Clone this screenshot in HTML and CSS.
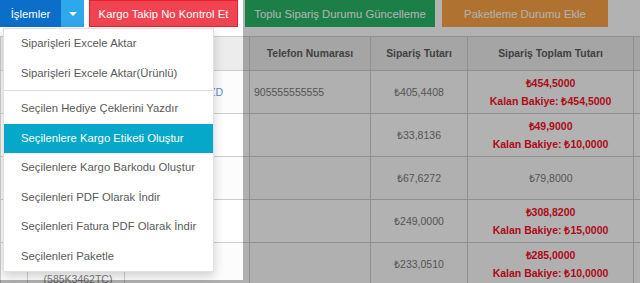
FILE: index.html
```html
<!DOCTYPE html>
<html lang="tr">
<head>
<meta charset="utf-8">
<title>Siparişler</title>
<link rel="stylesheet" href="styles.css">
</head>
<body>
<div class="page">
  <div class="toolbar">
    <div class="btn-group">
      <button class="btn btn-primary">İşlemler</button>
      <button class="btn btn-caret"><span class="caret"></span></button>
    </div>
    <button class="btn btn-red">Kargo Takip No Kontrol Et</button>
    <button class="btn btn-green">Toplu Sipariş Durumu Güncelleme</button>
    <button class="btn btn-orange">Paketleme Durumu Ekle</button>
  </div>

  <table class="orders">
    <colgroup>
      <col class="c-check"><col class="c-code"><col class="c-name"><col class="c-phone"><col class="c-amount"><col class="c-total"><col class="c-rest">
    </colgroup>
    <thead>
      <tr>
        <th></th><th></th><th></th><th>Telefon Numarası</th><th>Sipariş Tutarı</th><th>Sipariş Toplam Tutarı</th><th></th>
      </tr>
    </thead>
    <tbody>
      <tr>
        <td></td><td class="code"></td><td class="name"><a href="#">ÖZD</a></td><td class="phone">905555555555</td><td class="amount">₺405,4408</td><td class="total red">₺454,5000<br>Kalan Bakiye: ₺454,5000</td><td></td>
      </tr>
      <tr>
        <td></td><td class="code"></td><td class="name"></td><td class="phone"></td><td class="amount">₺33,8136</td><td class="total red">₺49,9000<br>Kalan Bakiye: ₺10,0000</td><td></td>
      </tr>
      <tr>
        <td></td><td class="code"></td><td class="name"></td><td class="phone"></td><td class="amount">₺67,6272</td><td class="total">₺79,8000</td><td></td>
      </tr>
      <tr>
        <td></td><td class="code"></td><td class="name"></td><td class="phone"></td><td class="amount">₺249,0000</td><td class="total red">₺308,8200<br>Kalan Bakiye: ₺15,0000</td><td></td>
      </tr>
      <tr>
        <td></td><td class="code"><br><span class="sub">(585K3462TC)</span></td><td class="name"></td><td class="phone"></td><td class="amount">₺233,0510</td><td class="total red">₺285,0000<br>Kalan Bakiye: ₺10,0000</td><td></td>
      </tr>
    </tbody>
  </table>

  <div class="shade shade-right"></div>
  <div class="shade shade-bottom"></div>

  <ul class="dropdown">
    <li><a href="#">Siparişleri Excele Aktar</a></li>
    <li><a href="#">Siparişleri Excele Aktar(Ürünlü)</a></li>
    <li class="divider"></li>
    <li><a href="#">Seçilen Hediye Çeklerini Yazdır</a></li>
    <li class="active"><a href="#">Seçilenlere Kargo Etiketi Oluştur</a></li>
    <li><a href="#">Seçilenlere Kargo Barkodu Oluştur</a></li>
    <li><a href="#">Seçilenleri PDF Olarak İndir</a></li>
    <li><a href="#">Seçilenleri Fatura PDF Olarak İndir</a></li>
    <li><a href="#">Seçilenleri Paketle</a></li>
  </ul>
</div>
</body>
</html>
```

FILE: styles.css
```css
html, body {
  margin: 0;
  padding: 0;
  background: #fff;
  overflow: hidden;
}
body {
  font-family: "Liberation Sans", Arial, Helvetica, sans-serif;
  width: 640px;
  height: 283px;
}
.page {
  position: relative;
  width: 640px;
  height: 283px;
  overflow: hidden;
}
.toolbar {
  display: flex;
  align-items: flex-start;
  height: 27px;
}
.btn {
  font-family: inherit;
  font-size: 11.3px;
  color: #fff;
  border: 1px solid transparent;
  height: 27px;
  margin: 0;
  padding: 0;
  display: flex;
  align-items: center;
  justify-content: center;
  box-sizing: border-box;
  border-radius: 0;
}
.btn-group {
  display: flex;
  margin-right: 5px;
}
.btn-primary {
  background: #0b6ec8;
  border-color: #0b6ec8;
  width: 61px;
}
.btn-caret {
  background: #2ea8ec;
  border-color: #2ea8ec;
  width: 23px;
}
.caret {
  width: 0;
  height: 0;
  border-left: 4px solid transparent;
  border-right: 4px solid transparent;
  border-top: 4px solid #fff;
}
.btn-red {
  background: #f04452;
  border-color: #e8202f;
  width: 149px;
  margin-right: 7px;
}
.btn-green {
  background: #27b766;
  border-color: #27b766;
  width: 190px;
  margin-right: 7px;
}
.btn-orange {
  background: #fca446;
  border-color: #fca446;
  width: 166px;
}

.orders {
  margin-top: 9px;
  border-collapse: collapse;
  table-layout: fixed;
  width: 700px;
  font-size: 10.5px;
  color: #7a7a7a;
}
.c-check { width: 27px; }
.c-code { width: 97px; }
.c-name { width: 125px; }
.c-phone { width: 121px; }
.c-amount { width: 97px; }
.c-total { width: 166px; }
.c-rest { width: 67px; }
.orders th, .orders td {
  border: 1px solid #cdcdcd;
  text-align: center;
  vertical-align: middle;
  line-height: 18px;
  white-space: nowrap;
  overflow: hidden;
}
.orders th {
  background: #ececec;
  color: #5e5e5e;
  font-weight: bold;
  font-size: 10.4px;
  height: 33px;
  padding: 0 4px;
}
.orders td {
  height: 36px;
  padding: 3px 4px;
}
.orders td.code .sub { position: relative; top: 6px; left: 2px; }
.orders tbody tr:nth-child(odd) td { background: #fcfcfc; }
.orders td.phone { text-align: left; }
.orders td.name { text-align: right; padding-right: 26px; }
.orders td.name a { color: #5a8bd0; text-decoration: none; }
.orders td.red {
  color: #f8101f;
  font-weight: bold;
}

.shade {
  position: absolute;
  background: rgba(0, 0, 0, 0.3);
}
.shade-right {
  left: 243px;
  top: 0;
  right: 0;
  bottom: 0;
}
.shade-bottom {
  left: 0;
  width: 243px;
  top: 280px;
  bottom: 0;
}

.dropdown {
  position: absolute;
  top: 28px;
  left: 3px;
  width: 211px;
  margin: 0;
  padding: 0;
  list-style: none;
  background: #fff;
  border: 1px solid rgba(0, 0, 0, 0.12);
  box-shadow: 0 4px 10px rgba(0, 0, 0, 0.18);
  box-sizing: border-box;
}
.dropdown li a {
  display: block;
  padding: 5px 17px;
  line-height: 19.5px;
  font-size: 11.3px;
  color: #5a5a5a;
  text-decoration: none;
  white-space: nowrap;
}
.dropdown li.active a {
  background: #05a8c8;
  color: #fff;
}
.dropdown li.divider {
  height: 1px;
  margin: 2px 0 3px;
  background: #dedede;
}
```
